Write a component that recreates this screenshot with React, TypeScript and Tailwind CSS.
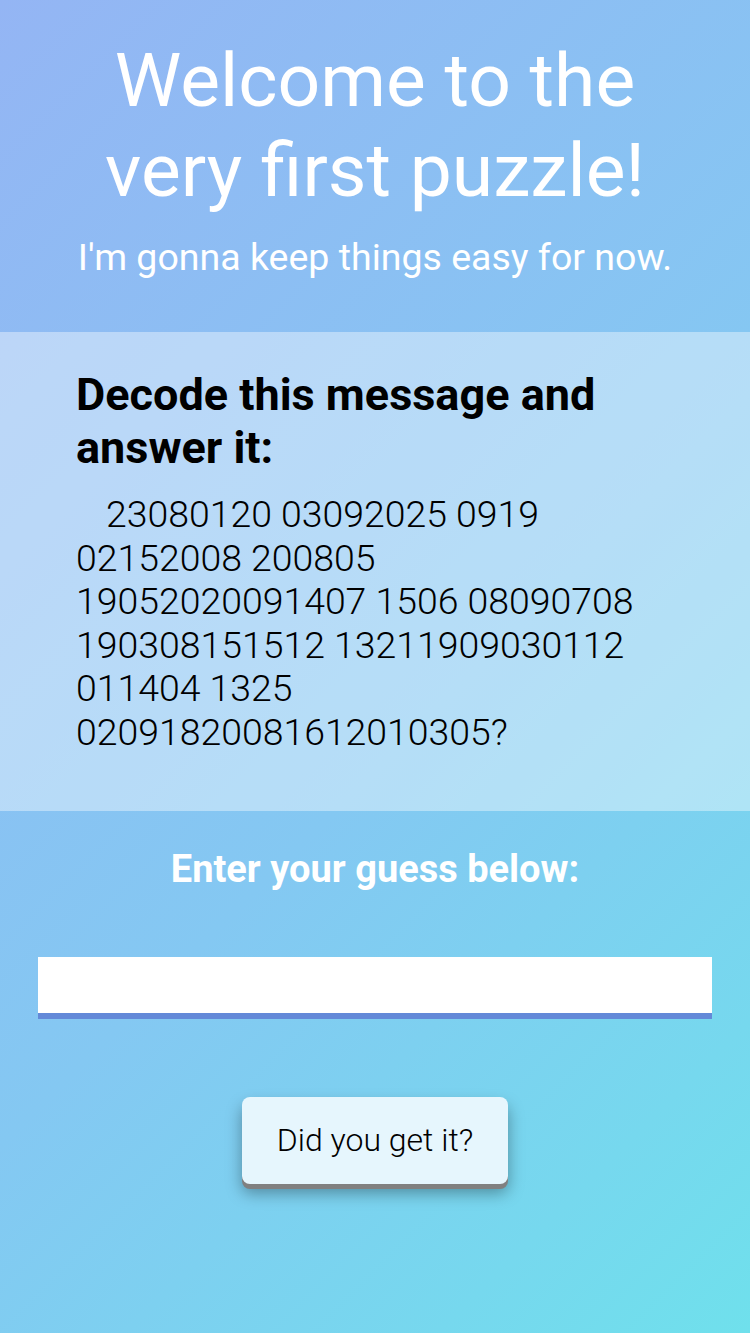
import React from "react";

const numbers =
  "23080120 03092025 0919 02152008 200805 19052020091407 1506 08090708 190308151512 13211909030112 011404 1325 02091820081612010305?";

const App = () => {
  return (
    <div className="min-h-[1333px] w-full bg-[linear-gradient(135deg,#94b5f4_0%,#84c8f2_55%,#6fe0ec_100%)] font-['Roboto',sans-serif]">
      <header className="flex flex-col items-center pt-[35px] pb-[53px] text-center text-white">
        <h1 className="text-[75px] font-normal leading-[90px]">
          Welcome to the
          <br />
          very first puzzle!
        </h1>
        <p className="mt-[20px] text-[37.5px] leading-[44px]">I'm gonna keep things easy for now.</p>
      </header>

      <section className="bg-white/40 pl-[76px] pr-[99px] pt-[36px] pb-[56px] text-black">
        <h2 className="text-[45px] font-bold leading-[53px]">Decode this message and answer it:</h2>
        <p className="mt-[19px] indent-[30px] text-[37.4px] font-light leading-[43.6px]">{numbers}</p>
      </section>

      <section className="flex flex-col items-center pt-[36px]">
        <h3 className="text-[38px] font-bold leading-[44px] text-white">Enter your guess below:</h3>
        <input
          type="text"
          className="mt-[66px] h-[62px] w-[674px] border-b-[6px] border-[#6389d8] bg-white px-3 text-[28px] outline-none"
        />
        <button className="mt-[78px] h-[87px] w-[266px] rounded-[8px] bg-[#e6f6fd] text-[32px] font-light text-black shadow-[0_5px_0_#808080,0_9px_16px_rgba(0,0,0,0.35)]">
          Did you get it?
        </button>
      </section>
    </div>
  );
};

export default App;
